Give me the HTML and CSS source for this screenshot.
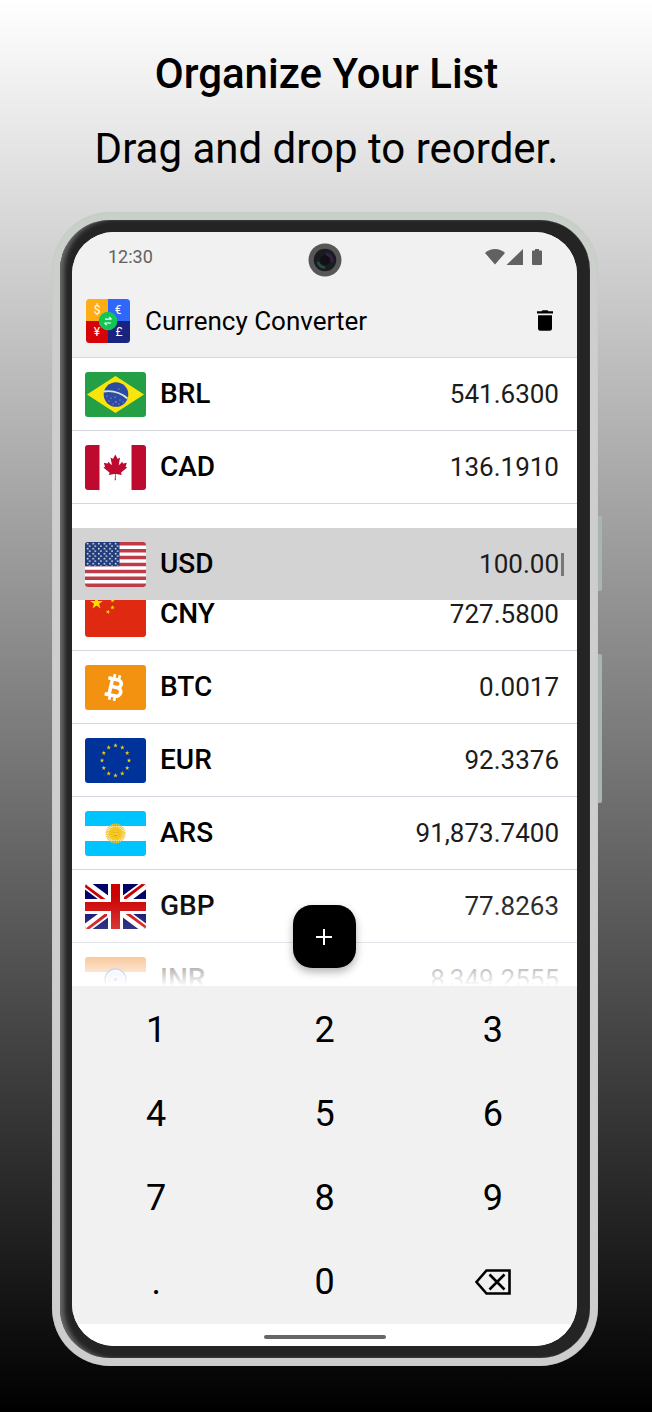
FILE: index.html
```html
<!DOCTYPE html>
<html lang="en">
<head>
<meta charset="utf-8">
<meta name="viewport" content="width=device-width, initial-scale=1">
<title>Currency Converter</title>
<link rel="stylesheet" href="styles.css">
</head>
<body>
<main class="promo">
  <header class="headline">
    <h1 class="headline-title">Organize Your List</h1>
    <p class="headline-text">Drag and drop to reorder.</p>
  </header>

  <div class="phone">
    <span class="side-key side-key-power"></span>
    <span class="side-key side-key-volume"></span>
    <div class="bezel">
      <div class="screen">
        <div class="status-bar">
          <span class="clock">12:30</span>
          <svg class="status-icons" viewBox="0 0 58 18" aria-hidden="true">
            <path d="M0 5C5.500-.3 14.500-.3 20 5L10 16.500z"/>
            <path d="M38 1v16H21.500z"/>
            <path d="M48 2.500h2V1h4v1.500h2q1 0 1 1v12.500q0 1-1 1h-8q-1 0-1-1V3.500q0-1 1-1z"/>
          </svg>
          <svg class="camera" viewBox="0 0 34 34" aria-hidden="true">
            <circle cx="17" cy="17" r="16.500" fill="#575757"/>
            <circle cx="17" cy="17" r="11.300" fill="#1b1c20"/>
            <circle cx="17" cy="17" r="5" fill="#101015"/>
            <path d="M10 19a7.500 7.500 0 0 0 7 5.500" fill="none" stroke="#2b4d48" stroke-width="2.500"/>
            <path d="M18 11a7 7 0 0 1 6 8" fill="none" stroke="#371f45" stroke-width="3"/>
          </svg>
        </div>

        <div class="app-bar">
          <svg class="logo" viewBox="0 0 44 44" aria-hidden="true">
            <defs><clipPath id="logo-clip"><rect width="44" height="44" rx="3.500"/></clipPath></defs>
            <g clip-path="url(#logo-clip)">
              <path fill="#feae14" d="M0 0h22v22H0z"/>
              <path fill="#2f67fb" d="M22 0h22v22H22z"/>
              <path fill="#d70206" d="M0 22h22v22H0z"/>
              <path fill="#1a237e" d="M22 22h22v22H22z"/>
            </g>
            <g class="logo-signs">
              <text x="11" y="15">$</text>
              <text x="32" y="15">€</text>
              <text x="11" y="37">¥</text>
              <text x="33" y="37">£</text>
            </g>
            <circle cx="22" cy="22" r="9.300" fill="#12c655"/>
            <path d="M19 20.200h6.500M23.300 18l2.200 2.200M25 24h-6.500M20.700 26.200 18.500 24" fill="none" stroke="#fff" stroke-width="1.200"/>
          </svg>
          <h2 class="app-title">Currency Converter</h2>
          <button class="icon-button" type="button" aria-label="Delete">
            <svg class="trash" viewBox="0 0 16 21" aria-hidden="true">
              <path d="M0 1.300h4.500L5.500.2h5l1 1.100H16v2.300H0z"/>
              <path d="M1 5.200h14v13.300q0 2.300-2.300 2.300H3.300Q1 20.800 1 18.500z"/>
            </svg>
          </button>
        </div>

        <div class="list-area">
          <ul class="currencies">
            <li class="row">
              <svg class="flag" viewBox="0 0 61 45" aria-hidden="true">
                <path fill="#259f46" d="M0 0h61v45H0z"/>
                <path fill="#f9e50b" d="M30.500 4 59 22.500 30.500 41 2 22.500z"/>
                <circle cx="31" cy="22.500" r="12.300" fill="#2d4ba5"/>
                <path d="M19 19.500c8-1.200 17 1.500 23.500 7" fill="none" stroke="#cfe8d4" stroke-width="1.900"/>
                <g fill="#b9c6e8"><circle cx="22" cy="24" r=".6"/><circle cx="26" cy="26" r=".6"/><circle cx="24" cy="29" r=".5"/><circle cx="30" cy="25" r=".6"/><circle cx="31" cy="30" r=".7"/><circle cx="35" cy="28" r=".6"/><circle cx="38" cy="30" r=".6"/><circle cx="34" cy="32" r=".5"/><circle cx="28" cy="32" r=".5"/><circle cx="34" cy="17" r=".5"/></g>
              </svg>
              <span class="code">BRL</span>
              <span class="amount">541.6300</span>
            </li>
            <li class="row">
              <svg class="flag" viewBox="0 0 61 45" aria-hidden="true">
                <path fill="#fff" d="M0 0h61v45H0z"/>
                <path fill="#bf0a30" d="M0 0h14.500v45H0zM46.500 0H61v45H46.500z"/>
                <path fill="#bf0a30" transform="translate(30.300 22.200) scale(.0064)" d="m-90 2030 45-863a95 95 0 0 0-111-98l-859 151 116-320a65 65 0 0 0-20-73l-941-762 212-99a65 65 0 0 0 34-79l-186-572 542 115a65 65 0 0 0 73-38l105-247 423 454a65 65 0 0 0 111-57l-204-1052 327 189a65 65 0 0 0 91-27l332-652 332 652a65 65 0 0 0 91 27l327-189-204 1052a65 65 0 0 0 111 57l423-454 105 247a65 65 0 0 0 73 38l542-115-186 572a65 65 0 0 0 34 79l212 99-941 762a65 65 0 0 0-20 73l116 320-859-151a95 95 0 0 0-111 98l45 863z"/>
              </svg>
              <span class="code">CAD</span>
              <span class="amount">136.1910</span>
            </li>
            <li class="row row-dragging">
              <svg class="flag" viewBox="0 0 61 45" aria-hidden="true">
                <defs>
                  <pattern id="stars" width="5.600" height="5" patternUnits="userSpaceOnUse">
                    <circle cx="2.600" cy="1.700" r=".85" fill="#dfe5f2"/>
                    <circle cx="4.700" cy="4.100" r=".85" fill="#dfe5f2"/>
                  </pattern>
                </defs>
                <path fill="#fff" d="M0 0h61v45H0z"/>
                <path stroke="#bf3b47" stroke-width="3.460" d="M0 1.730h61M0 8.650h61M0 15.580h61M0 22.500h61M0 29.420h61M0 36.350h61M0 43.270h61"/>
                <path fill="#233d7b" d="M0 0h34.500v24.200H0z"/>
                <path fill="url(#stars)" d="M0 0h34.500v24.200H0z"/>
              </svg>
              <label class="code" for="usd">USD</label>
              <input class="amount amount-input" id="usd" type="text" inputmode="decimal" value="100.00">
              <span class="caret"></span>
            </li>
            <li class="row">
              <svg class="flag" viewBox="0 0 61 45" aria-hidden="true">
                <defs><path id="star" d="M0-1 .2245-.309.951-.309.363.118.588.809 0 .382-.588.809-.363.118-.951-.309-.2245-.309z"/></defs>
                <path fill="#df2910" d="M0 0h61v45H0z"/>
                <g fill="#ffde00">
                  <use href="#star" transform="translate(11.500 11) scale(6.800)"/>
                  <use href="#star" transform="translate(23 4.500) scale(2.400)"/>
                  <use href="#star" transform="translate(27.500 8.500) rotate(20) scale(2.400)"/>
                  <use href="#star" transform="translate(27.500 15.500) scale(2.400)"/>
                  <use href="#star" transform="translate(23 20) rotate(20) scale(2.400)"/>
                </g>
              </svg>
              <span class="code">CNY</span>
              <span class="amount">727.5800</span>
            </li>
            <li class="row">
              <svg class="flag" viewBox="0 0 61 45" aria-hidden="true">
                <path fill="#f39210" d="M0 0h61v45H0z"/>
                <g transform="translate(29.500 22.500) rotate(13)" fill="none" stroke="#fff">
                  <path stroke-width="3.600" d="M-3.800-8.200V8.200M-8.200-8.200H2a3.700 3.700 0 0 1 0 7.700H-3.800M2-.5h.8a4.350 4.350 0 0 1 0 8.700H-8.200"/>
                  <path stroke-width="2.700" d="M-2.500-13.200v4M2.500-13.200v4M-2.500 9.200v4M2.500 9.200v4"/>
                </g>
              </svg>
              <span class="code">BTC</span>
              <span class="amount">0.0017</span>
            </li>
            <li class="row">
              <svg class="flag" viewBox="0 0 61 45" aria-hidden="true">
                <path fill="#039" d="M0 0h61v45H0z"/>
                <g fill="#f5cb12">
                  <use href="#star" transform="translate(30.500 7.500) scale(2.400)"/>
                  <use href="#star" transform="translate(37.300 9.500) scale(2.400)"/>
                  <use href="#star" transform="translate(42.200 15) scale(2.400)"/>
                  <use href="#star" transform="translate(44 22.500) scale(2.400)"/>
                  <use href="#star" transform="translate(42.200 30) scale(2.400)"/>
                  <use href="#star" transform="translate(37.300 35.500) scale(2.400)"/>
                  <use href="#star" transform="translate(30.500 37.500) scale(2.400)"/>
                  <use href="#star" transform="translate(23.700 35.500) scale(2.400)"/>
                  <use href="#star" transform="translate(18.800 30) scale(2.400)"/>
                  <use href="#star" transform="translate(17 22.500) scale(2.400)"/>
                  <use href="#star" transform="translate(18.800 15) scale(2.400)"/>
                  <use href="#star" transform="translate(23.700 9.500) scale(2.400)"/>
                </g>
              </svg>
              <span class="code">EUR</span>
              <span class="amount">92.3376</span>
            </li>
            <li class="row">
              <svg class="flag" viewBox="0 0 61 45" aria-hidden="true">
                <path fill="#fff" d="M0 0h61v45H0z"/>
                <path fill="#00c4ff" d="M0 0h61v15H0zM0 30h61v15H0z"/>
                <circle cx="30.500" cy="22.500" r="8" fill="none" stroke="#efc52e" stroke-width="4" stroke-dasharray="1 .57"/>
                <circle cx="30.500" cy="22.500" r="7" fill="#f5cb22"/>
                <circle cx="30.500" cy="22.500" r="4" fill="none" stroke="#e8b51a" stroke-width=".7"/>
                <path d="M28.500 21.500h1.200M31.300 21.500h1.200M29 24.500h3" stroke="#c99a18" stroke-width=".8"/>
              </svg>
              <span class="code">ARS</span>
              <span class="amount">91,873.7400</span>
            </li>
            <li class="row">
              <svg class="flag" viewBox="0 0 61 45" aria-hidden="true">
                <path fill="#006" d="M0 0h61v45H0z"/>
                <path stroke="#fff" stroke-width="9" d="M0 0 61 45M61 0 0 45"/>
                <path fill="#c00" d="M0 0v3.200L15.500 15h5zM61 0h-4.500L39 13v2h2.500zM0 45h4.500L22 32v-2h-2.500zM61 45v-3.200L45.500 30h-5z"/>
                <path stroke="#fff" stroke-width="15" d="M30.500 0v45M0 22.500h61"/>
                <path stroke="#c00" stroke-width="9" d="M30.500 0v45M0 22.500h61"/>
              </svg>
              <span class="code">GBP</span>
              <span class="amount">77.8263</span>
            </li>
            <li class="row">
              <svg class="flag" viewBox="0 0 61 45" aria-hidden="true">
                <path fill="#fff" d="M0 0h61v45H0z"/>
                <path fill="#f28a2a" d="M0 0h61v15H0z"/>
                <path fill="#128807" d="M0 30h61v15H0z"/>
                <circle cx="30.500" cy="22.500" r="10.500" fill="#fff" stroke="#4468bd" stroke-width="1.600"/>
                <circle cx="30.500" cy="22.500" r="6" fill="none" stroke="#8fa5d8" stroke-width="5" stroke-dasharray=".6 .97"/>
                <circle cx="30.500" cy="22.500" r="2" fill="#4468bd"/>
              </svg>
              <span class="code">INR</span>
              <span class="amount">8,349.2555</span>
            </li>
          </ul>
          <button class="add-button" type="button" aria-label="Add currency">
            <svg class="plus" viewBox="0 0 16 16" aria-hidden="true"><path d="M8 0v16M0 8h16" stroke="#fff" stroke-width="2"/></svg>
          </button>
        </div>

        <div class="keypad">
          <button class="key" type="button">1</button>
          <button class="key" type="button">2</button>
          <button class="key" type="button">3</button>
          <button class="key" type="button">4</button>
          <button class="key" type="button">5</button>
          <button class="key" type="button">6</button>
          <button class="key" type="button">7</button>
          <button class="key" type="button">8</button>
          <button class="key" type="button">9</button>
          <button class="key" type="button">.</button>
          <button class="key" type="button">0</button>
          <button class="key" type="button" aria-label="Backspace">
            <svg class="backspace" viewBox="0 0 36 26" aria-hidden="true">
              <path d="M11.500 1.500H34.500V24.500H11.500L1.500 13zM14.500 5.500l15 15M29.500 5.500l-15 15" fill="none" stroke="#000" stroke-width="2.600"/>
            </svg>
          </button>
        </div>

        <div class="nav-bar"><span class="home-handle"></span></div>
      </div>
    </div>
  </div>
</main>
</body>
</html>
```

FILE: styles.css
```css
* {
  box-sizing: border-box;
}

html {
  min-height: 100%;
  background: linear-gradient(#fff, #000);
}

body {
  margin: 0;
  font-family: Roboto, "Liberation Sans", sans-serif;
  color: #000;
}

.promo {
  display: flex;
  flex-direction: column;
  gap: 37px;
  padding: 48px 54px 47px 52px;
}

.headline {
  display: flex;
  flex-direction: column;
  gap: 23px;
  padding-left: 3px;
  text-align: center;
}

.headline-title,
.headline-text {
  margin: 0;
  font-size: 42px;
  line-height: 52px;
  font-weight: 400;
  white-space: nowrap;
}

.headline-title {
  font-weight: 500;
}

.phone {
  position: relative;
  padding: 8px;
  border-radius: 58px;
  background: linear-gradient(#c8cfc8, #cdcfcd 60px, #cdcdcd);
  box-shadow: inset 0 0 2px #b9c9b9;
}

.side-key {
  position: absolute;
  left: 100%;
  width: 4px;
  border-radius: 0 2px 2px 0;
  background: #a9b5b1;
}

.side-key-power {
  top: 304px;
  height: 75px;
}

.side-key-volume {
  top: 442px;
  height: 149px;
}

.bezel {
  padding: 12px 13px 12px 12px;
  border-radius: 50px;
  background: #242424;
  box-shadow: inset 6px 0 5px -2px #6a6a6a, inset 0 0 1px #777;
}

.screen {
  overflow: hidden;
  border-radius: 42px;
  background: #fff;
}

.status-bar {
  position: relative;
  display: flex;
  align-items: center;
  justify-content: space-between;
  height: 50px;
  padding: 0 34px 0 36px;
  background: #f1f1f1;
}

.clock {
  font-size: 18px;
  line-height: 20px;
  color: #616161;
}

.status-icons {
  width: 58px;
  height: 18px;
  fill: #616161;
}

.camera {
  position: absolute;
  top: 11px;
  left: calc(50% - 17px);
  width: 34px;
  height: 34px;
}

.app-bar {
  display: flex;
  align-items: center;
  gap: 15px;
  height: 76px;
  padding: 2px 20px 0 14px;
  border-bottom: 1px solid #d6d6df;
  background: #f1f1f1;
}

.logo {
  width: 44px;
  height: 44px;
}

.logo-signs {
  font-size: 12px;
  text-anchor: middle;
  fill: #fff;
}

.app-title {
  flex: 1;
  margin: 0;
  font-size: 26px;
  line-height: 32px;
  font-weight: 400;
}

.icon-button {
  display: flex;
  padding: 4px;
  border: 0;
  background: none;
}

.trash {
  width: 16px;
  height: 21px;
}

.list-area {
  position: relative;
  overflow: hidden;
  height: 628px;
}

.list-area::after {
  content: "";
  position: absolute;
  inset: auto 0 0;
  z-index: 2;
  height: 92px;
  background: linear-gradient(rgba(255, 255, 255, 0), rgba(255, 255, 255, 0.28) 50%, rgba(255, 255, 255, 0.75) 83%, #fff);
}

.currencies {
  margin: 0;
  padding: 0;
  list-style: none;
}

.row {
  display: flex;
  align-items: center;
  gap: 14px;
  height: 73px;
  padding: 0 18px 0 13px;
  border-bottom: 1px solid #d6d6df;
}

.row-dragging {
  position: relative;
  z-index: 1;
  height: 72px;
  margin: 24px 0 -22px;
  border-bottom: 0;
  background: #d3d3d3;
}

.flag {
  flex: none;
  width: 61px;
  height: 45px;
  border-radius: 3px;
}

.code {
  font-size: 28px;
  line-height: 34px;
  font-weight: 500;
}

.amount {
  flex: 1;
  min-width: 0;
  font-size: 26px;
  line-height: 34px;
  text-align: right;
  color: #1c1c1c;
}

.amount-input {
  padding: 0;
  border: 0;
  outline: 0;
  background: none;
  font-family: inherit;
}

.caret {
  position: absolute;
  right: 13px;
  width: 3px;
  height: 23px;
  background: #777;
}

.add-button {
  position: absolute;
  bottom: 18px;
  left: calc(50% - 32px);
  z-index: 3;
  display: flex;
  align-items: center;
  justify-content: center;
  width: 63px;
  height: 63px;
  padding: 0;
  border: 0;
  border-radius: 19px;
  background: #000;
  box-shadow: 0 4px 9px rgba(0, 0, 0, 0.3);
}

.plus {
  width: 16px;
  height: 16px;
}

.keypad {
  display: grid;
  grid-template-columns: repeat(3, 1fr);
  padding-top: 2px;
  background: #f1f1f1;
}

.key {
  display: flex;
  align-items: center;
  justify-content: center;
  height: 84px;
  padding: 0;
  border: 0;
  background: none;
  font-family: inherit;
  font-size: 36px;
  line-height: 42px;
  color: #000;
}

.backspace {
  width: 36px;
  height: 26px;
}

.nav-bar {
  display: flex;
  justify-content: center;
  padding: 11px 0 7px;
  background: #fff;
}

.home-handle {
  width: 122px;
  height: 4px;
  border-radius: 2px;
  background: #666;
}
```
